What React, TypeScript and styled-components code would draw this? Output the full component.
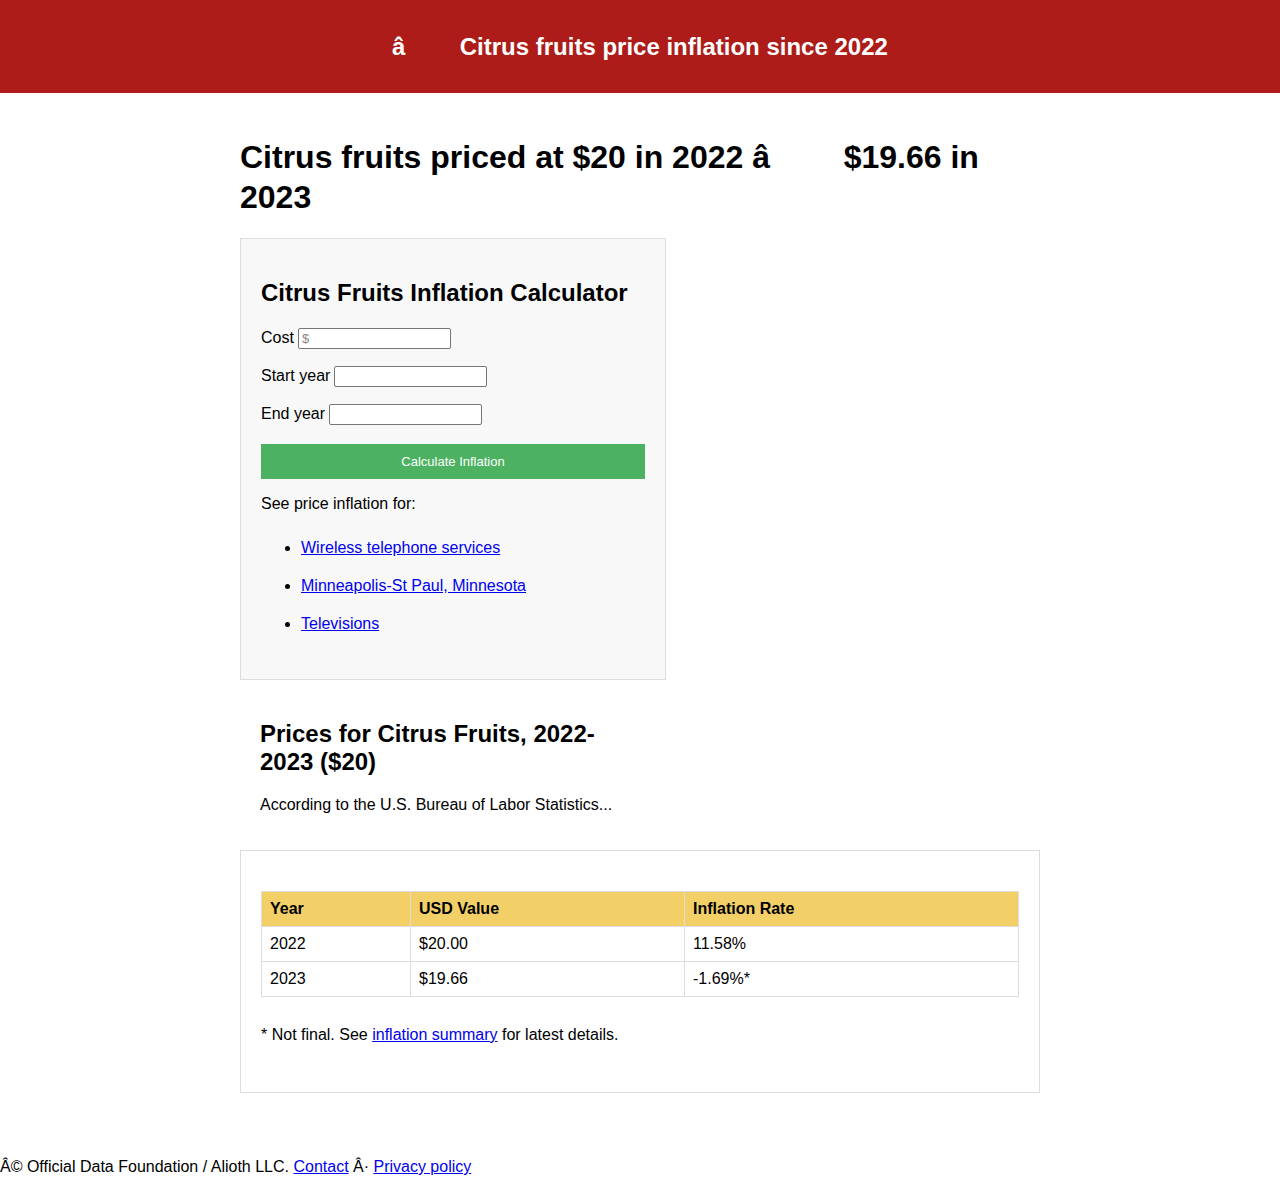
import { createGlobalStyle, styled } from "styled-components";

const GlobalStyle = createGlobalStyle`
  body {
    margin: 0;
    font-family: "Liberation Sans", Arial, sans-serif;
    font-size: 16px;
    color: #000;
    background: #fff;
  }
  a {
    color: #0000ee;
  }
`;

const Header = styled.header`
  background: #ad1c18;
  height: 93px;
  box-sizing: border-box;
  padding-top: 1px;
  display: flex;
  align-items: center;
  justify-content: center;
`;

const HeaderTitle = styled.div`
  color: #fff;
  font-size: 24px;
  font-weight: 700;
`;

// the broken em dash bytes show as wide blanks
const Garbled = styled.span`
  letter-spacing: 0.2em;
`;

const Main = styled.main`
  width: 800px;
  margin: 0 auto;
  padding: 20px 0 0;
`;

const Title = styled.h1`
  font-size: 32px;
  line-height: 40px;
  font-weight: 700;
  margin: 24px 0 21px;
`;

const Panel = styled.section<{ $boxed?: boolean; $wide?: boolean }>`
  width: ${({ $wide }) => ($wide ? "758px" : "384px")};
  padding: 20px;
  border: ${({ $boxed }) => ($boxed ? "1px solid #dddddd" : "none")};
  background: ${({ $boxed, $wide }) => ($boxed && !$wide ? "#f8f8f8" : "#fff")};
`;

const PanelTitle = styled.h2`
  font-size: 24px;
  line-height: 28px;
  font-weight: 700;
  margin: 20px 0;
`;

const Field = styled.p`
  margin: 0 0 16px;
  line-height: 21px;
`;

const Input = styled.input`
  width: 153px;
  height: 21px;
  box-sizing: border-box;
  border: 1px solid #767676;
  border-radius: 2px;
  padding: 1px 3px;
  font-family: "Liberation Sans", Arial, sans-serif;
  font-size: 13px;
  vertical-align: baseline;
  background: #fff;
  margin-left: 4px;
  &::placeholder {
    color: #8a8a8a;
  }
`;

const CalcButton = styled.button`
  display: block;
  width: 100%;
  height: 35px;
  margin-top: 19px;
  border: none;
  background: #4cb262;
  color: #fff;
  font-family: "Liberation Sans", Arial, sans-serif;
  font-size: 13px;
`;

const Text = styled.p`
  margin: 16px 0;
  line-height: 18px;
`;

const LinkList = styled.ul`
  margin: 16px 0;
  padding-left: 40px;
`;

const LinkItem = styled.li`
  padding: 10px 0;
  line-height: 18px;
`;

const Table = styled.table`
  width: 100%;
  border-collapse: collapse;
  margin-top: 20px;
`;

const Th = styled.th<{ $w?: number }>`
  width: ${({ $w }) => ($w ? `${$w}px` : "auto")};
  background: #f3cf67;
  border: 1px solid #dddddd;
  text-align: left;
  padding: 8px;
  line-height: 18px;
  font-weight: 700;
`;

const Td = styled.td`
  border: 1px solid #dddddd;
  padding: 8px;
  line-height: 18px;
`;

const Note = styled.p`
  margin: 29px 0 28px;
  line-height: 18px;
`;

const Footer = styled.footer`
  margin-top: 65px;
  line-height: 18px;
  padding-bottom: 18px;
`;

const rows = [
  { year: "2022", value: "$20.00", rate: "11.58%" },
  { year: "2023", value: "$19.66", rate: "-1.69%*" },
];

const links = [
  "Wireless telephone services",
  "Minneapolis-St Paul, Minnesota",
  "Televisions",
];

export default function App() {
  return (
    <>
      <GlobalStyle />
      <Header>
        <HeaderTitle>
          {"\u00e2"}
          <Garbled>{"\u0080\u0094"}</Garbled>
          {" Citrus fruits price inflation since 2022"}
        </HeaderTitle>
      </Header>
      <Main>
        <Title>
          {"Citrus fruits priced at $20 in 2022 \u00e2"}
          <Garbled>{"\u0080\u0094"}</Garbled>
          {" $19.66 in 2023"}
        </Title>
        <Panel $boxed>
          <PanelTitle>Citrus Fruits Inflation Calculator</PanelTitle>
          <Field>
            Cost<Input type="text" placeholder="$" />
          </Field>
          <Field>
            Start year<Input type="text" />
          </Field>
          <Field>
            End year<Input type="text" />
          </Field>
          <CalcButton>Calculate Inflation</CalcButton>
          <Text>See price inflation for:</Text>
          <LinkList>
            {links.map((l) => (
              <LinkItem key={l}>
                <a href="#">{l}</a>
              </LinkItem>
            ))}
          </LinkList>
        </Panel>
        <Panel>
          <PanelTitle>Prices for Citrus Fruits, 2022-2023 ($20)</PanelTitle>
          <Text>According to the U.S. Bureau of Labor Statistics...</Text>
        </Panel>
        <Panel $boxed $wide>
          <Table>
            <thead>
              <tr>
                <Th $w={132}>Year</Th>
                <Th $w={257}>USD Value</Th>
                <Th>Inflation Rate</Th>
              </tr>
            </thead>
            <tbody>
              {rows.map((r) => (
                <tr key={r.year}>
                  <Td>{r.year}</Td>
                  <Td>{r.value}</Td>
                  <Td>{r.rate}</Td>
                </tr>
              ))}
            </tbody>
          </Table>
          <Note>
            * Not final. See <a href="#">inflation summary</a> for latest details.
          </Note>
        </Panel>
      </Main>
      <Footer>
        {"\u00c2\u00a9 Official Data Foundation / Alioth LLC. "}
        <a href="#">Contact</a>
        {" \u00c2\u00b7 "}
        <a href="#">Privacy policy</a>
      </Footer>
    </>
  );
}
